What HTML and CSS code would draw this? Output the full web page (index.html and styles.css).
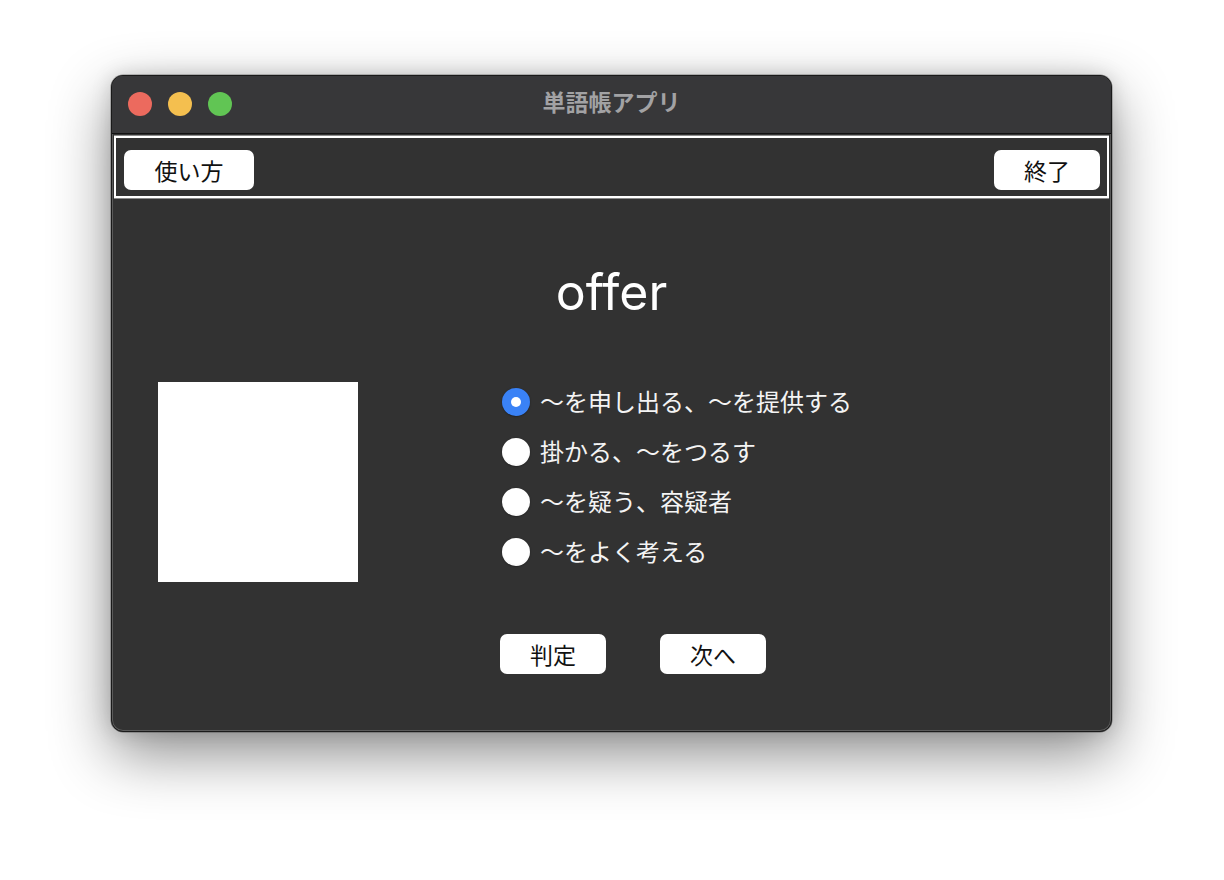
FILE: index.html
```html
<!DOCTYPE html>
<html lang="ja">
<head>
<meta charset="utf-8">
<title>単語帳アプリ</title>
<link rel="stylesheet" href="styles.css">
</head>
<body>
<div class="window">
  <div class="titlebar">
    <div class="lights">
      <span class="light red"></span>
      <span class="light yellow"></span>
      <span class="light green"></span>
    </div>
    <div class="title">単語帳アプリ</div>
  </div>
  <div class="toolbar">
    <button class="btn btn-help">使い方</button>
    <button class="btn btn-quit">終了</button>
  </div>
  <div class="content">
    <div class="word">offer</div>
    <div class="middle">
      <div class="picture"></div>
      <div class="choices">
        <label class="choice"><span class="radio checked"></span><span class="label">〜を申し出る、〜を提供する</span></label>
        <label class="choice"><span class="radio"></span><span class="label">掛かる、〜をつるす</span></label>
        <label class="choice"><span class="radio"></span><span class="label">〜を疑う、容疑者</span></label>
        <label class="choice"><span class="radio"></span><span class="label">〜をよく考える</span></label>
      </div>
    </div>
    <div class="actions">
      <button class="btn btn-action">判定</button>
      <button class="btn btn-action">次へ</button>
    </div>
  </div>
</div>
</body>
</html>
```
FILE: styles.css
```css
html, body {
  margin: 0;
  padding: 0;
  background: #ffffff;
}
body {
  width: 1224px;
  height: 880px;
  overflow: hidden;
  font-family: "Noto Sans CJK JP", "Noto Sans", sans-serif;
}
.window {
  margin: 75px 0 0 111px;
  width: 1001px;
  height: 657px;
  box-sizing: border-box;
  border: 1px solid #1a1a1a;
  border-radius: 12px;
  background: #323232;
  box-shadow: 0 0 0 0.5px rgba(0,0,0,0.4), inset 0 0 0 1px #5a5a5a, 0 22px 60px rgba(0,0,0,0.45), 0 0 20px rgba(0,0,0,0.15);
  overflow: hidden;
  display: flex;
  flex-direction: column;
}
.titlebar {
  height: 57px;
  flex: none;
  background: #373739;
  border-bottom: 1px solid #111;
  position: relative;
  display: flex;
  align-items: center;
  justify-content: center;
}
.lights {
  position: absolute;
  left: 16px;
  top: 16px;
  display: flex;
  gap: 16px;
}
.light {
  width: 24px;
  height: 24px;
  border-radius: 50%;
  display: block;
}
.red { background: #ec6a5e; }
.yellow { background: #f4bf4f; }
.green { background: #61c554; }
.title {
  color: #a2a2a4;
  font-size: 23px;
  font-weight: bold;
  margin-top: -7px;
}
.toolbar {
  flex: none;
  margin: 1px 2px 0 2px;
  height: 64px;
  box-sizing: border-box;
  border-top: 1px solid #8a8a8a;
  border-bottom: 1px solid #8a8a8a;
  box-shadow: inset 0 0 0 2px #ffffff;
  background: #323232;
  display: flex;
  align-items: center;
  justify-content: space-between;
  padding: 5px 9px 0 10px;
}
.btn {
  background: #ffffff;
  border: none;
  border-radius: 7px;
  height: 40px;
  color: #111;
  font-family: "Noto Sans CJK JP", sans-serif;
  font-size: 23px;
  padding: 0;
  display: flex;
  align-items: center;
  justify-content: center;
}
.btn-help { width: 130px; }
.btn-quit { width: 106px; }
.content {
  flex: 1;
  display: flex;
  flex-direction: column;
}
.word {
  font-family: Inter, "Liberation Sans", sans-serif;
  font-variant-ligatures: none;
  font-size: 50px;
  color: #ffffff;
  text-align: center;
  line-height: 50px;
  margin-top: 68px;
  height: 50px;
}
.middle {
  display: flex;
  margin-top: 60px;
}
.picture {
  width: 200px;
  height: 200px;
  background: #ffffff;
  margin-left: 46px;
  margin-top: 5px;
  flex: none;
}
.choices {
  margin-left: 144px;
  display: flex;
  flex-direction: column;
}
.choice {
  height: 50px;
  display: flex;
  align-items: center;
  gap: 10px;
}
.radio {
  width: 28px;
  height: 28px;
  border-radius: 50%;
  background: radial-gradient(circle at 50% 45%, #ffffff 60%, #e8e8e8 100%);
  box-shadow: 0 0.5px 1.5px rgba(0,0,0,0.5);
  box-sizing: border-box;
  position: relative;
  flex: none;
}
.radio.checked {
  background: #3a82f6;
}
.radio.checked::after {
  content: "";
  position: absolute;
  left: 9px;
  top: 9px;
  width: 10px;
  height: 10px;
  border-radius: 50%;
  background: #ffffff;
}
.label {
  color: #f4f4f4;
  font-size: 24px;
  line-height: 28px;
  margin-top: -3px;
}
.actions {
  display: flex;
  gap: 54px;
  margin-left: 388px;
  margin-top: 52px;
}
.btn-action { width: 106px; }
```
